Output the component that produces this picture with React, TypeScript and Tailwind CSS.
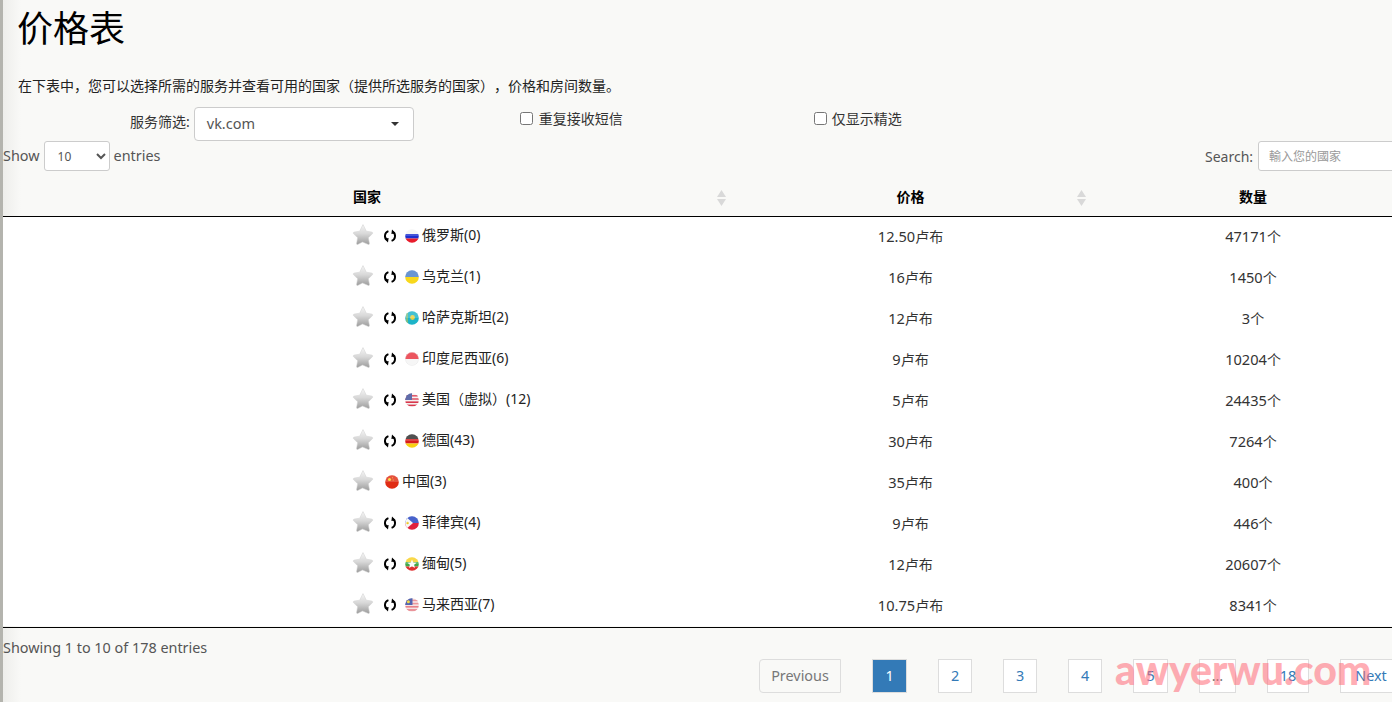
import type { ReactNode } from 'react';

const font = "font-['Noto_Sans','Noto_Sans_CJK_SC',sans-serif]";

function Star() {
  return (
    <svg width="22" height="22" viewBox="0 0 22 22" className="relative -top-[2px] shrink-0">
      <defs>
        <linearGradient id="starfill" x1="0" y1="0" x2="0" y2="1">
          <stop offset="0" stopColor="#f4f4f4" />
          <stop offset="0.45" stopColor="#d8d8d8" />
          <stop offset="1" stopColor="#9c9c9c" />
        </linearGradient>
      </defs>
      <path
        d="M11 1c.6 0 1 .4 1.3 1l2.5 5.2 5.4.8c1.1.2 1.4 1 .7 1.8l-4 3.9 1 5.5c.2 1.1-.6 1.6-1.5 1.1L11 18l-4.4 2.3c-.9.5-1.7 0-1.5-1.1l1-5.5-4-3.9C1.400 9 1.700 8.200 2.800 8l5.400-.8L10.700 2c.3-.6.700-1 1.300-1z"
        transform="translate(-0.5 0)"
        fill="url(#starfill)"
        stroke="#d0d0d0"
        strokeWidth="0.5"
      />
    </svg>
  );
}

function Refresh() {
  return (
    <svg width="14" height="14" viewBox="0 0 14 14" fill="none" className="relative -top-[1px] shrink-0">
      <path d="M5.400 2.200A5 5 0 0 0 4 11" stroke="#000" strokeWidth="1.900" />
      <path d="M8.600 11.800A5 5 0 0 0 10 3" stroke="#000" strokeWidth="1.900" />
      <path d="M1.200 9.800L5.600 9 5 13.600zM12.800 4.200L8.400 5 9 .4z" fill="#000" />
    </svg>
  );
}

function Flag({ id, children }: { id: string; children: ReactNode }) {
  return (
    <svg width="14" height="14" viewBox="0 0 14 14" className="relative -top-[1px] shrink-0">
      <defs>
        <clipPath id={`clip-${id}`}>
          <circle cx="7" cy="7" r="6.8" />
        </clipPath>
      </defs>
      <g clipPath={`url(#clip-${id})`}>
        {children}
        <rect x="0" y="0" width="14" height="7" fill="#fff" opacity="0.18" />
      </g>
    </svg>
  );
}

const flags: Record<string, ReactNode> = {
  ru: (
    <>
      <rect width="14" height="5" fill="#f4f4f4" />
      <rect y="5" width="14" height="4.5" fill="#1c2fd0" />
      <rect y="9.5" width="14" height="4.5" fill="#e81c2c" />
    </>
  ),
  ua: (
    <>
      <rect width="14" height="7" fill="#4a7fc8" />
      <rect y="7" width="14" height="7" fill="#f8d81c" />
    </>
  ),
  kz: (
    <>
      <rect width="14" height="14" fill="#1cb4c8" />
      <circle cx="7.5" cy="6.5" r="2.4" fill="#e8d040" />
      <rect x="1.5" y="2" width="1" height="10" fill="#d8c840" />
    </>
  ),
  id: (
    <>
      <rect width="14" height="7" fill="#e8303c" />
      <rect y="7" width="14" height="7" fill="#f6f6f6" />
      <circle cx="7" cy="7" r="6.700" fill="none" stroke="#e4e4e4" strokeWidth="0.5" />
    </>
  ),
  us: (
    <>
      <rect width="14" height="14" fill="#f6f0f0" />
      <rect y="2" width="14" height="1.6" fill="#d8384c" />
      <rect y="5.2" width="14" height="1.6" fill="#d8384c" />
      <rect y="8.4" width="14" height="1.6" fill="#d8384c" />
      <rect y="11.6" width="14" height="1.6" fill="#d8384c" />
      <rect width="7" height="7" fill="#3c4c98" />
    </>
  ),
  de: (
    <>
      <rect width="14" height="5" fill="#2a2a2a" />
      <rect y="5" width="14" height="4.5" fill="#d81c1c" />
      <rect y="9.5" width="14" height="4.5" fill="#f8d010" />
    </>
  ),
  cn: (
    <>
      <rect width="14" height="14" fill="#e02c14" />
      <circle cx="4.5" cy="4.6" r="1.5" fill="#f8d820" />
      <circle cx="7.5" cy="2.8" r="0.5" fill="#f8d820" />
      <circle cx="8.2" cy="5" r="0.5" fill="#f8d820" />
    </>
  ),
  ph: (
    <>
      <rect width="14" height="7" fill="#2040c0" />
      <rect y="7" width="14" height="7" fill="#e0203c" />
      <path d="M0 0L8 7L0 14z" fill="#f6f6f6" />
      <circle cx="2.6" cy="7" r="1.2" fill="#f0c820" />
    </>
  ),
  mm: (
    <>
      <rect width="14" height="5" fill="#f8d020" />
      <rect y="5" width="14" height="4.5" fill="#40a848" />
      <rect y="9.5" width="14" height="4.5" fill="#e03030" />
      <path d="M7 2.4l1.3 3.1 3.3.2-2.5 2.1.8 3.2L7 9.3l-2.9 1.7.8-3.2-2.5-2.1 3.3-.2z" fill="#fbfbfb" />
    </>
  ),
  my: (
    <>
      <rect width="14" height="14" fill="#f4e4e4" />
      <rect y="1.6" width="14" height="1.6" fill="#e88088" />
      <rect y="4.8" width="14" height="1.6" fill="#e88088" />
      <rect y="8" width="14" height="1.6" fill="#e88088" />
      <rect y="11.2" width="14" height="1.6" fill="#e88088" />
      <rect width="7.5" height="7" fill="#2c44a0" />
      <circle cx="3.4" cy="3.8" r="1.5" fill="#f0d020" />
    </>
  ),
};

const rows = [
  { flag: 'ru', name: '俄罗斯(0)', price: '12.50', count: '47171' },
  { flag: 'ua', name: '乌克兰(1)', price: '16', count: '1450' },
  { flag: 'kz', name: '哈萨克斯坦(2)', price: '12', count: '3' },
  { flag: 'id', name: '印度尼西亚(6)', price: '9', count: '10204' },
  { flag: 'us', name: '美国（虚拟）(12)', price: '5', count: '24435' },
  { flag: 'de', name: '德国(43)', price: '30', count: '7264' },
  { flag: 'cn', name: '中国(3)', price: '35', count: '400', noRefresh: true },
  { flag: 'ph', name: '菲律宾(4)', price: '9', count: '446' },
  { flag: 'mm', name: '缅甸(5)', price: '12', count: '20607' },
  { flag: 'my', name: '马来西亚(7)', price: '10.75', count: '8341' },
];

const pages = [
  { label: 'Previous', w: 'w-[82px]', cls: 'text-[#777] rounded-l-[4px]' },
  { label: '1', w: 'w-[35px]', cls: 'bg-[#337ab7] border-[#337ab7] text-white' },
  { label: '2', w: 'w-[34px]', cls: 'text-[#337ab7] bg-white' },
  { label: '3', w: 'w-[34px]', cls: 'text-[#337ab7] bg-white' },
  { label: '4', w: 'w-[34px]', cls: 'text-[#337ab7] bg-white' },
  { label: '5', w: 'w-[35px]', cls: 'text-[#337ab7] bg-white' },
  { label: '…', w: 'w-[37px]', cls: 'text-[#777] bg-white' },
  { label: '18', w: 'w-[42px]', cls: 'text-[#337ab7] bg-white' },
  { label: 'Next', w: 'w-[62px]', cls: 'text-[#337ab7] bg-white' },
];

function SortIcon() {
  return (
    <svg width="9" height="16" viewBox="0 0 9 16" className="absolute right-[7px] top-[11px]">
      <path d="M4.5 0L9 7H0z" fill="#d9d9d9" />
      <path d="M4.5 16L0 9h9z" fill="#d9d9d9" />
    </svg>
  );
}

export default function App() {
  return (
    <div className={`${font} relative flex h-[702px] w-[1392px] overflow-hidden bg-[#f9f9f7] text-[#333] [text-spacing-trim:space-all]`}>
      <div className="w-[3px] shrink-0 bg-[#b4b4ae]" />
      <div className="min-w-0 flex-1 bg-[linear-gradient(to_right,#eeeeeb,#f9f9f7_18px)]">
        <h1 className="pl-[14px] pt-[4px] text-[36px] font-normal leading-[50px] text-black">价格表</h1>
        <p className="mt-[23px] pl-[15px] text-[14px] leading-[18px] text-[#222]">
          在下表中，您可以选择所需的服务并查看可用的国家（提供所选服务的国家），价格和房间数量。
        </p>

        <div className="mt-[12px] flex h-[34px] items-start">
          <label className="ml-[127px] flex h-[28px] items-center text-[14px] text-[#333]">服务筛选:</label>
          <div className="ml-[4px] flex h-[34px] w-[220px] items-center justify-between rounded-[4px] border border-[#ccc] bg-white px-3 text-[14.500px] text-[#555]">
            vk.com
            <span className="mr-[2px] h-0 w-0 border-x-[4px] border-t-[4px] border-x-transparent border-t-[#333]" />
          </div>
          <label className="ml-[106px] flex h-[22px] items-center gap-[6px] text-[14px]">
            <input type="checkbox" className="m-0 h-[13px] w-[13px]" />
            重复接收短信
          </label>
          <label className="ml-[191px] flex h-[22px] items-center gap-[5px] text-[14px]">
            <input type="checkbox" className="m-0 h-[13px] w-[13px]" />
            仅显示精选
          </label>
        </div>

        <div className="flex h-[30px] items-center justify-between">
          <div className="flex items-center gap-[4px] text-[14.400px] text-[#555]">
            Show
            <select className="h-[30px] w-[66px] rounded-[3px] border border-[#ccc] bg-white pl-[9px] text-[12px] text-[#555]">
              <option>10</option>
            </select>
            entries
          </div>
          <div className="flex w-[187px] shrink-0 items-center gap-[5px] whitespace-nowrap text-[14px] text-[#555]">
            Search:
            <input
              placeholder="輸入您的國家"
              className="h-[30px] w-[200px] shrink-0 rounded-[3px] border border-[#ccc] bg-white px-[10px] text-[12px] placeholder:text-[#999]"
            />
          </div>
        </div>

        <table className="mt-[8px] w-[1410px] table-fixed border-collapse text-[14px] text-[#333]">
          <colgroup>
            <col className="w-[730px]" />
            <col className="w-[360px]" />
            <col className="w-[320px]" />
          </colgroup>
          <thead>
            <tr className="h-[37px] border-b border-black text-black">
              <th className="relative pb-[2px] pl-[350px] text-left font-bold">
                国家
                <SortIcon />
              </th>
              <th className="relative pb-[2px] pr-[5px] text-center font-bold">
                价格
                <SortIcon />
              </th>
              <th className="pb-[2px] text-center font-bold">数量</th>
            </tr>
          </thead>
          <tbody className="bg-white">
            {rows.map((r) => (
              <tr key={r.flag} className="h-[41px]">
                <td className="pl-[349px]">
                  <div className="flex items-center">
                    <Star />
                    {r.noRefresh ? (
                      <span className="w-[11px] shrink-0" />
                    ) : (
                      <span className="ml-[9px] mr-[8px] flex">
                        <Refresh />
                      </span>
                    )}
                    <span className="mr-[3px] flex">
                      <Flag id={r.flag}>{flags[r.flag]}</Flag>
                    </span>
                    <span className="relative -top-[2px] text-[#222]">{r.name}</span>
                  </div>
                </td>
                <td className="pr-[5px] text-center">
                  <span className="text-[14.600px]">{r.price}</span>卢布
                </td>
                <td className="text-center">
                  <span className="text-[14.600px]">{r.count}</span>个
                </td>
              </tr>
            ))}
          </tbody>
        </table>

        <div className="mt-[1px] h-[42px] border-t border-black pt-[10px] text-[14.400px] leading-[20px] text-[#555]">
          Showing 1 to 10 of 178 entries
        </div>

        <div className="flex -mt-[10px] gap-[31px] pl-[756px]">
          {pages.map((p) => (
            <div
              key={p.label}
              className={`flex h-[34px] shrink-0 items-center justify-center border border-[#ddd] text-[14.400px] ${p.w} ${p.cls}`}
            >
              {p.label}
            </div>
          ))}
        </div>
      </div>

      <div className="pointer-events-none absolute left-[1115px] top-[645px] text-[41px] font-black leading-[50px] text-[#ff6b78] opacity-55 font-['Lato',sans-serif]">
        awyerwu.com
      </div>
    </div>
  );
}
